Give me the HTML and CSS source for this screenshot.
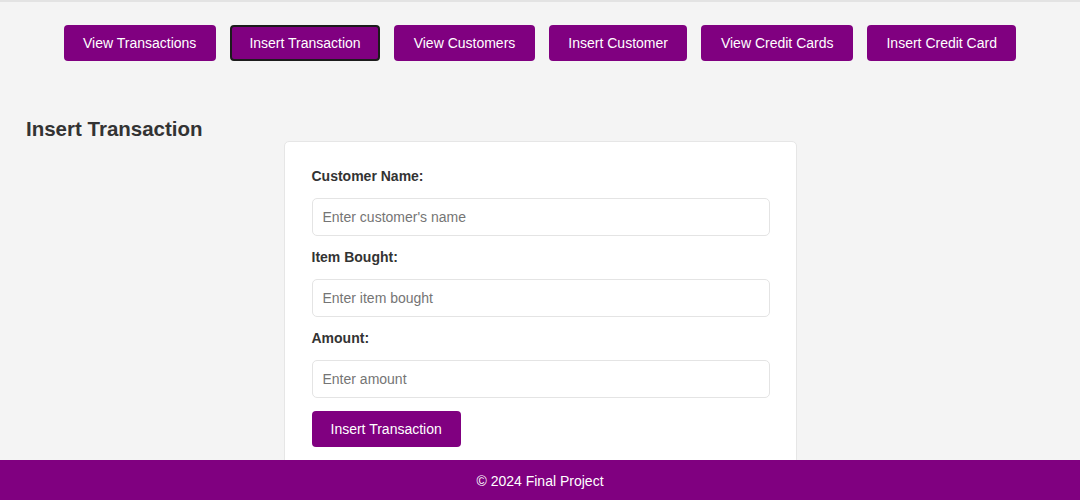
FILE: index.html
```html
<!DOCTYPE html>
<html lang="en">
<head>
<meta charset="utf-8">
<title>Insert Transaction</title>
<link rel="stylesheet" href="styles.css">
</head>
<body>
<header class="topbar">
  <nav class="nav">
    <a class="nav-btn" href="#">View Transactions</a>
    <a class="nav-btn active" href="#">Insert Transaction</a>
    <a class="nav-btn" href="#">View Customers</a>
    <a class="nav-btn" href="#">Insert Customer</a>
    <a class="nav-btn" href="#">View Credit Cards</a>
    <a class="nav-btn" href="#">Insert Credit Card</a>
  </nav>
</header>
<main class="main">
  <h2 class="page-title">Insert Transaction</h2>
  <form class="card">
    <label class="field-label" for="cname">Customer Name:</label>
    <input class="field-input" id="cname" type="text" placeholder="Enter customer's name">
    <label class="field-label" for="item">Item Bought:</label>
    <input class="field-input" id="item" type="text" placeholder="Enter item bought">
    <label class="field-label" for="amount">Amount:</label>
    <input class="field-input" id="amount" type="text" placeholder="Enter amount">
    <button class="submit-btn" type="button">Insert Transaction</button>
  </form>
</main>
<footer class="footer">© 2024 Final Project</footer>
</body>
</html>
```
FILE: styles.css
```css
* {
  box-sizing: border-box;
}

html, body {
  margin: 0;
  padding: 0;
}

body {
  background: #f4f4f4;
  font-family: "Liberation Sans", Arial, sans-serif;
  font-size: 14px;
  color: #333;
  border-top: 2px solid #e3e3e3;
}

.topbar {
  padding-top: 23px;
}

.nav {
  display: flex;
  justify-content: center;
  gap: 14px;
}

.nav-btn {
  display: block;
  background: #800080;
  color: #fff;
  text-decoration: none;
  font-size: 14px;
  line-height: 16px;
  padding: 10px 19.5px;
  border-radius: 4px;
}

.nav-btn.active {
  border: 2px solid #1c1c1c;
  padding: 8px 17.5px;
}

.main {
  padding: 0 26px 40px;
}

.page-title {
  margin: 56px 0 1px;
  font-size: 20.5px;
  line-height: 23px;
  font-weight: bold;
  color: #333;
}

.card {
  width: 513px;
  margin: 0 auto;
  background: #fff;
  border: 1px solid #e6e6e6;
  border-radius: 5px;
  padding: 26px 26px 26px 27px;
  display: flex;
  flex-direction: column;
  align-items: flex-start;
}

.field-label {
  display: block;
  font-weight: bold;
  font-size: 14px;
  line-height: 16px;
  margin-bottom: 14px;
  color: #333;
}

.field-input {
  width: 100%;
  height: 38px;
  margin: 0 0 13px;
  padding: 0 10px;
  border: 1px solid #e4e4e4;
  border-radius: 5px;
  font-family: "Liberation Sans", Arial, sans-serif;
  font-size: 14px;
  color: #333;
  background: #fff;
}

.field-input::placeholder {
  color: #757575;
}

.submit-btn {
  background: #800080;
  color: #fff;
  border: 0;
  border-radius: 4px;
  font-family: "Liberation Sans", Arial, sans-serif;
  font-size: 14px;
  line-height: 16px;
  padding: 10px 19px;
  cursor: pointer;
}

.footer {
  position: fixed;
  left: 0;
  right: 0;
  bottom: 0;
  height: 40px;
  padding-top: 1px;
  background: #800080;
  color: #fff;
  font-size: 14px;
  line-height: 40px;
  text-align: center;
}
```
